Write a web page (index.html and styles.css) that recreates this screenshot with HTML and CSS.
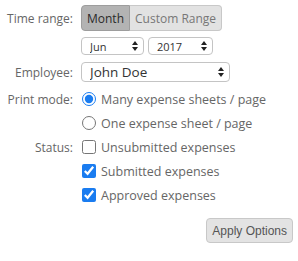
FILE: index.html
```html
<!DOCTYPE html>
<html lang="en">
<head>
  <meta charset="UTF-8">
  <title>Print Options</title>
  <link rel="stylesheet" href="styles.css">
</head>
<body>
  <form class="options">
    <div class="row row-range">
      <label class="label">Time range:</label>
      <div class="btn-group">
        <button type="button" class="seg active">Month</button>
        <button type="button" class="seg">Custom Range</button>
      </div>
    </div>

    <div class="row row-period">
      <span class="label"></span>
      <div class="selects">
        <span class="select-wrap small month">
          <select class="select"><option>Jun</option></select>
          <svg class="arrows" width="6" height="10" viewBox="0 0 6 10"><path d="M3 0L6 4H0Z M3 10L6 6H0Z" fill="#222"/></svg>
        </span>
        <span class="select-wrap small year">
          <select class="select"><option>2017</option></select>
          <svg class="arrows" width="6" height="10" viewBox="0 0 6 10"><path d="M3 0L6 4H0Z M3 10L6 6H0Z" fill="#222"/></svg>
        </span>
      </div>
    </div>

    <div class="row row-employee">
      <label class="label" for="employee">Employee:</label>
      <span class="select-wrap large">
        <select class="select" id="employee"><option>John Doe</option></select>
        <svg class="arrows" width="6" height="10" viewBox="0 0 6 10"><path d="M3 0L6 4H0Z M3 10L6 6H0Z" fill="#222"/></svg>
      </span>
    </div>

    <div class="row choice">
      <span class="label">Print mode:</span>
      <label class="opt"><input type="radio" name="mode" checked> Many expense sheets / page</label>
    </div>
    <div class="row choice">
      <span class="label"></span>
      <label class="opt"><input type="radio" name="mode"> One expense sheet / page</label>
    </div>

    <div class="row choice">
      <span class="label">Status:</span>
      <label class="opt"><input type="checkbox"> Unsubmitted expenses</label>
    </div>
    <div class="row choice">
      <span class="label"></span>
      <label class="opt"><input type="checkbox" checked> Submitted expenses</label>
    </div>
    <div class="row choice">
      <span class="label"></span>
      <label class="opt"><input type="checkbox" checked> Approved expenses</label>
    </div>

    <div class="actions">
      <button type="button" class="btn-apply">Apply Options</button>
    </div>
  </form>
</body>
</html>
```

FILE: styles.css
```css
* {
  margin: 0;
  padding: 0;
  box-sizing: border-box;
}

body {
  font-family: 'Open Sans', 'Noto Sans', sans-serif;
  font-size: 12px;
  color: #666;
  background: #fff;
}

.options {
  padding: 5px 5px 0 0;
}

.row {
  display: grid;
  grid-template-columns: 73px auto;
  column-gap: 8px;
  align-items: center;
}

.label {
  text-align: right;
  white-space: nowrap;
}

/* Time range buttons */
.row-range {
  height: 26px;
}

.btn-group {
  display: flex;
  justify-self: start;
}

.seg {
  font-family: inherit;
  font-size: 12px;
  height: 26px;
  padding: 0 5px;
  border: 1px solid #c8c8c8;
  background: #e2e2e2;
  color: #777;
  cursor: pointer;
}

.seg:first-child {
  border-radius: 4px 0 0 4px;
}

.seg:last-child {
  border-left: none;
  border-radius: 0 4px 4px 0;
}

.seg.active {
  background: #b3b3b3;
  border-color: #9d9d9d;
  color: #2a2a2a;
}

/* Selects */
.row-period {
  margin-top: 6px;
  height: 18px;
}

.selects {
  display: flex;
  gap: 4px;
}

.select-wrap {
  position: relative;
  display: inline-block;
}

.select {
  appearance: none;
  -webkit-appearance: none;
  width: 100%;
  font-family: inherit;
  color: #333;
  background: #fff;
  border: 1px solid #c4c4c4;
  border-radius: 4px;
  outline: none;
}

.select-wrap.small .select {
  height: 18px;
  font-size: 11px;
  padding: 0 0 0 8px;
}

.month { width: 63px; }
.year { width: 65px; }

.arrows {
  position: absolute;
  top: 50%;
  right: 6px;
  margin-top: -5px;
  pointer-events: none;
}

.row-employee {
  margin-top: 7px;
  height: 20px;
}

.select-wrap.large {
  width: 149px;
}

.select-wrap.large .select {
  height: 20px;
  font-size: 13.5px;
  padding: 0 0 0 8px;
}

/* Radios and checkboxes */
.row-employee + .choice {
  margin-top: 5px;
}

.choice {
  height: 24px;
}

.opt {
  display: flex;
  align-items: center;
  gap: 5px;
  font-size: 12.5px;
  white-space: nowrap;
}

.opt input {
  width: 14px;
  height: 14px;
  margin-left: 1px;
  accent-color: #1a7cf0;
}

/* Apply */
.actions {
  display: flex;
  justify-content: flex-end;
  margin-top: 11px;
}

.btn-apply {
  font-family: 'Liberation Sans', Arial, sans-serif;
  font-size: 12px;
  color: #555;
  height: 25px;
  padding: 0 5px;
  background: #e3e3e3;
  border: 1px solid #c8c8c8;
  border-radius: 4px;
  cursor: pointer;
}
```
